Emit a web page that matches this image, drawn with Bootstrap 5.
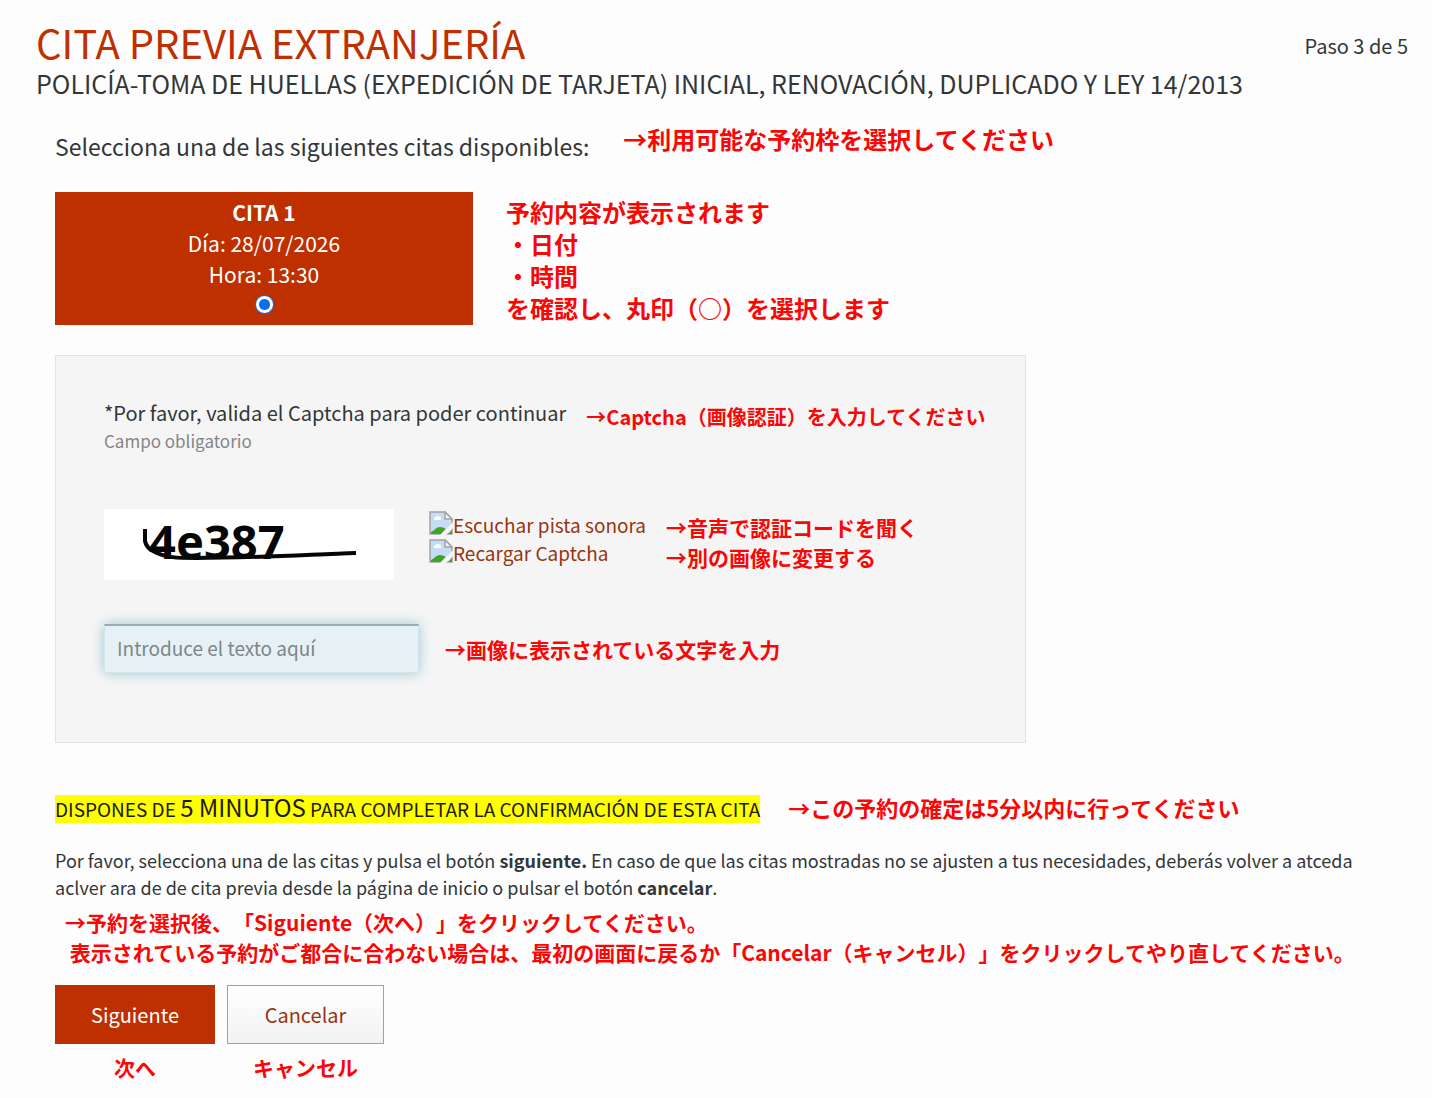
<!DOCTYPE html>
<html lang="es">
<head>
<meta charset="utf-8">
<meta name="viewport" content="width=device-width, initial-scale=1">
<title>Cita previa extranjería</title>
<link href="https://cdn.jsdelivr.net/npm/bootstrap@5.3.0/dist/css/bootstrap.min.css" rel="stylesheet">
<style>
  body { font-family: "Noto Sans CJK JP", "Noto Sans", sans-serif; font-size: 20px; line-height: 28px; color: #333638; background: #fdfdfd; text-spacing-trim: space-all; }
  .page-head { padding: 17px 24px 0 36px; }
  .page-title { font-size: 40px; line-height: 51px; color: #bf3000; font-weight: 400; }
  .page-sub { font-size: 25px; line-height: 30px; font-weight: 400; }
  .step { padding-top: 15px; }
  .page-main { padding: 25px 24px 12px 55px; }
  .intro { font-size: 23px; line-height: 32px; padding-top: 7px; padding-right: 34px; }
  .nota { color: #fb0606; font-weight: 700; }
  .nota-lg { font-size: 24px; line-height: 32px; }
  .nota-limit { font-size: 22px; line-height: 25px; padding-bottom: 3px; }
  .nota-md { font-size: 21px; line-height: 30px; }
  .nota-sm { font-size: 20px; line-height: 28px; }
  .slot { width: 418px; height: 133px; background: #bf3000; color: #fff; font-size: 21px; line-height: 31px; padding-top: 5px; }
  .slot-row { margin-top: 30px; gap: 33px; }
  .slot input { appearance: none; width: 19px; height: 19px; border-radius: 50%; border: 1px solid #1a6fe0; background: radial-gradient(circle, #0b6df5 0 5px, #fff 6px); margin: 5px 0 0; }
  .panel { max-width: 971px; margin-top: 30px; padding: 43px 40px 69px 48px; background: #f5f5f5; border: 1px solid #e3e3e3; }
  .required-hint { font-size: 17px; color: #858585; }
  .captcha-img { width: 290px; height: 71px; background: #fff; }
  .captcha-row { margin-top: 54px; gap: 35px; }
  .captcha-img text { font-family: "Noto Sans", sans-serif; font-weight: 700; font-size: 47px; fill: #060606; }
  .captcha-links { font-size: 19px; padding-top: 2px; }
  .captcha-links a { color: #96350f; text-decoration: none; }
  .captcha-notes { padding-top: 3px; margin-left: -15px; }
  .code-row { margin-top: 44px; gap: 26px; }
  .code-input { width: 315px; height: 49px; padding: 0 12px 3px; font-size: 19px; border-radius: 0; background: #e6f1f5; border: 1px solid #d3e4ea; border-top: 2px solid #97adb5; box-shadow: 0 0 12px #9cc6d4; transition: none; }
  .code-input:focus { background: #e6f1f5; }
  .code-input::placeholder { color: #7f8688; }
  .limit-row { margin-top: 52px; gap: 28px; }
  .limit { background: #ffff00; color: #1c1c10; font-size: 19px; line-height: 28px; }
  .limit span { font-size: 24px; line-height: 20px; }
  .help { margin-top: 24px; font-size: 18px; line-height: 27px; }
  .help-note { margin-top: 6px; padding-left: 10px; }
  .actions { margin-top: 18px; gap: 12px; }
  .actions .btn { height: 59px; width: 100%; font-size: 20px; border-radius: 0; transition: none; }
  .action-next { width: 160px; }
  .action-cancel { width: 157px; }
  .actions .btn-next { background: #bf3000; color: #fff; }
  .actions .btn-cancel { background: linear-gradient(#fff, #f1f2f3); color: #96350f; border: 1px solid #dc8c70; }
</style>
<script src="https://cdn.jsdelivr.net/npm/bootstrap@5.3.0/dist/js/bootstrap.bundle.min.js"></script>
</head>
<body>
<svg class="d-none" aria-hidden="true">
  <symbol id="broken-image" viewBox="0 0 24 24">
    <path d="M1 1H16l7 7V23H1z" fill="#c4dcf4" stroke="#a0a3a7" stroke-width="1.500"/>
    <path d="M5 8c0-2 2-2 3-3 2 0 2 1 4 1v3H5z" fill="#fff"/>
    <path d="M2 23v-2c3-1 5-5 9-5 3 0 4 1 6 2l-5 5z" fill="#3fa526"/>
    <path d="M19 23l4-4v4z" fill="#3fa526"/>
    <path d="M16 1v7h7z" fill="#f5f5f5" stroke="#a0a3a7" stroke-width="1.500"/>
    <path d="M11 24L24 11v6l-7 7z" fill="#f5f5f5"/>
  </symbol>
</svg>
<header class="page-head d-flex justify-content-between align-items-start">
  <div>
    <h1 class="page-title m-0">CITA PREVIA EXTRANJERÍA</h1>
    <h2 class="page-sub m-0">POLICÍA-TOMA DE HUELLAS (EXPEDICIÓN DE TARJETA) INICIAL, RENOVACIÓN, DUPLICADO Y LEY 14/2013</h2>
  </div>
  <div class="step text-nowrap">Paso 3 de 5</div>
</header>
<main class="page-main">
  <form>
    <div class="d-flex align-items-start">
      <p class="intro m-0">Selecciona una de las siguientes citas disponibles:</p>
      <p class="nota nota-lg m-0" lang="ja">→利用可能な予約枠を選択してください</p>
    </div>
    <div class="slot-row d-flex">
      <label class="slot d-flex flex-column align-items-center" for="cita1">
        <strong>CITA 1</strong>
        <span>Día: 28/07/2026</span>
        <span>Hora: 13:30</span>
        <input type="radio" id="cita1" name="cita" checked>
      </label>
      <div class="nota nota-lg pt-1" lang="ja">予約内容が表示されます<br>・日付<br>・時間<br>を確認し、丸印（○）を選択します</div>
    </div>

    <section class="panel">
      <div class="d-flex align-items-start">
        <div class="me-3 pe-1">
          <label for="codigo" class="d-block text-nowrap">*Por favor, valida el Captcha para poder continuar</label>
          <div class="required-hint">Campo obligatorio</div>
        </div>
        <div class="nota nota-sm pt-1 text-nowrap" lang="ja">→Captcha（画像認証）を入力してください</div>
      </div>
      <div class="captcha-row d-flex">
        <svg class="captcha-img" viewBox="0 0 290 71" role="img" aria-label="Captcha">
          <text x="45" y="50">4e387</text>
          <path d="M41 20v12c1 5 4 8 8 10 12 7 26 7 43 7 55 0 105-3 160-5" fill="none" stroke="#060606" stroke-width="4"/>
        </svg>
        <div class="captcha-links">
          <a href="#" class="d-flex align-items-start"><svg width="24" height="24" aria-hidden="true"><use href="#broken-image"/></svg>Escuchar pista sonora</a>
          <a href="#" class="d-flex align-items-start"><svg width="24" height="24" aria-hidden="true"><use href="#broken-image"/></svg>Recargar Captcha</a>
        </div>
        <div class="captcha-notes nota nota-md" lang="ja">→音声で認証コードを聞く<br>→別の画像に変更する</div>
      </div>
      <div class="code-row d-flex align-items-center">
        <input type="text" id="codigo" class="form-control code-input" placeholder="Introduce el texto aquí">
        <div class="nota nota-md" lang="ja">→画像に表示されている文字を入力</div>
      </div>
    </section>

    <div class="limit-row d-flex align-items-center">
      <div class="limit">DISPONES DE <span>5 MINUTOS</span> PARA COMPLETAR LA CONFIRMACIÓN DE ESTA CITA</div>
      <div class="nota nota-limit" lang="ja">→この予約の確定は5分以内に行ってください</div>
    </div>

    <p class="help mb-0">Por favor, selecciona una de las citas y pulsa el botón <strong>siguiente.</strong> En caso de que las citas mostradas no se ajusten a tus necesidades, deberás volver a atceda<br>aclver ara de de cita previa desde la página de inicio o pulsar el botón <strong>cancelar</strong>.</p>
    <div class="help-note nota nota-md" lang="ja">→予約を選択後、「Siguiente（次へ）」をクリックしてください。<br>&nbsp;表示されている予約がご都合に合わない場合は、最初の画面に戻るか「Cancelar（キャンセル）」をクリックしてやり直してください。</div>

    <div class="actions d-flex">
      <div class="action-next text-center">
        <button type="submit" class="btn btn-next">Siguiente</button>
        <div class="nota nota-md mt-2" lang="ja">次へ</div>
      </div>
      <div class="action-cancel text-center">
        <button type="button" class="btn btn-cancel">Cancelar</button>
        <div class="nota nota-md mt-2" lang="ja">キャンセル</div>
      </div>
    </div>
  </form>
</main>
</body>
</html>
